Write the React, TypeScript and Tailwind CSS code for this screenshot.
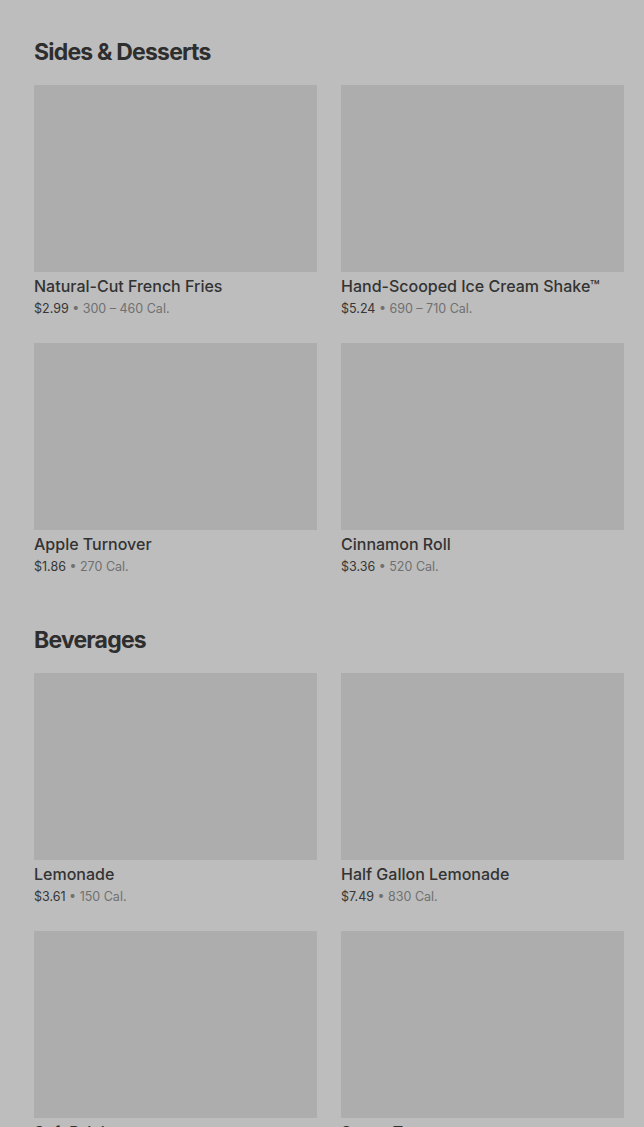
const sections = [
  {
    title: "Sides & Desserts",
    items: [
      { name: "Natural-Cut French Fries", price: "$2.99", cal: "300 – 460 Cal." },
      { name: "Hand-Scooped Ice Cream Shake™", price: "$5.24", cal: "690 – 710 Cal." },
      { name: "Apple Turnover", price: "$1.86", cal: "270 Cal." },
      { name: "Cinnamon Roll", price: "$3.36", cal: "520 Cal." },
    ],
  },
  {
    title: "Beverages",
    items: [
      { name: "Lemonade", price: "$3.61", cal: "150 Cal." },
      { name: "Half Gallon Lemonade", price: "$7.49", cal: "830 Cal." },
      { name: "Soft Drink", price: "$2.49", cal: "0 – 440 Cal." },
      { name: "Sweet Tea", price: "$2.49", cal: "0 – 250 Cal." },
    ],
  },
];

const App = () => {
  return (
    <div
      className="min-h-screen bg-[#bdbdbd] pl-[34px] pt-[36px] pb-10 overflow-hidden"
      style={{ fontFamily: "Inter, 'Liberation Sans', sans-serif" }}
    >
      {sections.map((section, i) => (
        <section key={i} className={i > 0 ? "mt-[47px]" : ""}>
          <h2 className="h-8 leading-8 text-[23px] font-bold tracking-[-0.035em] text-[#2e2e2e] mb-[17px]">
            {section.title}
          </h2>
          <div className="grid grid-cols-[283px_283px] gap-x-6 gap-y-6">
            {section.items.map((item, j) => (
              <div key={j}>
                <div className="h-[187px] bg-[#adadad]" />
                <div className="mt-[2px] text-[16px] leading-6 font-medium text-[#333333] truncate">
                  {item.name}
                </div>
                <div className="mt-[1px] text-[12.5px] leading-5 text-[#707070]">
                  <span className="text-[#363636]">{item.price}</span>
                  <span> • {item.cal}</span>
                </div>
              </div>
            ))}
          </div>
        </section>
      ))}
    </div>
  );
};

export default App;
